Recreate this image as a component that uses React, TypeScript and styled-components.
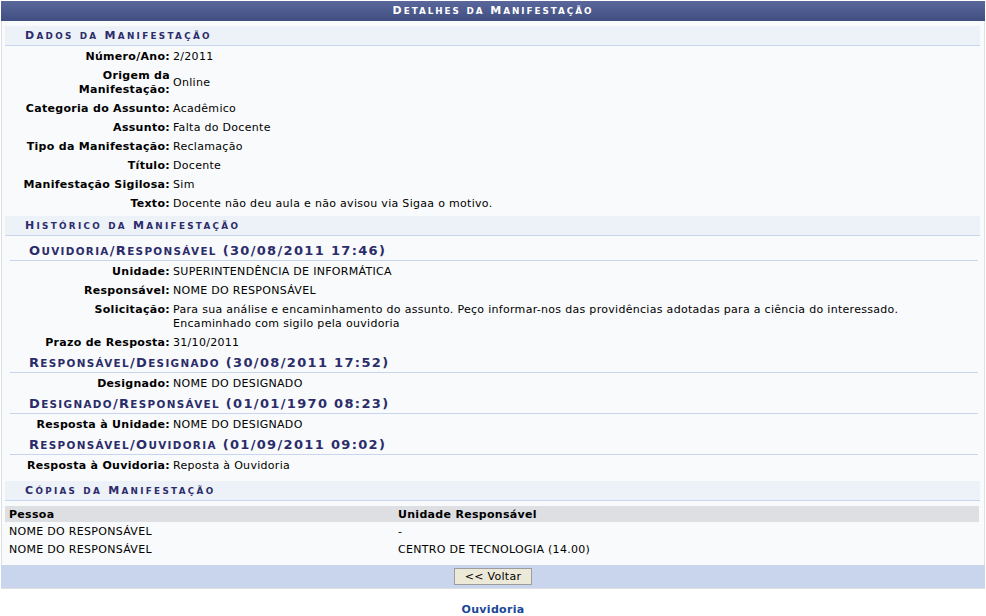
import React from 'react';
import styled, { createGlobalStyle } from 'styled-components';

const GlobalStyle = createGlobalStyle`
    body {
        margin: 0;
        background: #ffffff;
        font-family: 'DejaVu Sans', Verdana, sans-serif;
        font-size: 11px;
        letter-spacing: 0.3px;
        color: #000000;
    }
`;

type Field = { label: React.ReactNode; value: React.ReactNode; top?: boolean };

const dados: Field[] = [
    { label: 'Número/Ano:', value: '2/2011' },
    { label: <>Origem da<br />Manifestação:</>, value: 'Online' },
    { label: 'Categoria do Assunto:', value: 'Acadêmico' },
    { label: 'Assunto:', value: 'Falta do Docente' },
    { label: 'Tipo da Manifestação:', value: 'Reclamação' },
    { label: 'Título:', value: 'Docente' },
    { label: 'Manifestação Sigilosa:', value: 'Sim' },
    { label: 'Texto:', value: 'Docente não deu aula e não avisou via Sigaa o motivo.' },
];

const historico: { title: string; fields: Field[] }[] = [
    {
        title: 'Ouvidoria/Responsável (30/08/2011 17:46)',
        fields: [
            { label: 'Unidade:', value: 'SUPERINTENDÊNCIA DE INFORMÁTICA' },
            { label: 'Responsável:', value: 'NOME DO RESPONSÁVEL' },
            {
                label: 'Solicitação:',
                top: true,
                value: (
                    <>
                        Para sua análise e encaminhamento do assunto. Peço informar-nos das providências adotadas para a ciência do interessado.
                        <br />
                        Encaminhado com sigilo pela ouvidoria
                    </>
                ),
            },
            { label: 'Prazo de Resposta:', value: '31/10/2011' },
        ],
    },
    {
        title: 'Responsável/Designado (30/08/2011 17:52)',
        fields: [{ label: 'Designado:', value: 'NOME DO DESIGNADO' }],
    },
    {
        title: 'Designado/Responsável (01/01/1970 08:23)',
        fields: [{ label: 'Resposta à Unidade:', value: 'NOME DO DESIGNADO' }],
    },
    {
        title: 'Responsável/Ouvidoria (01/09/2011 09:02)',
        fields: [{ label: 'Resposta à Ouvidoria:', value: 'Reposta à Ouvidoria' }],
    },
];

const copias = [
    { pessoa: 'NOME DO RESPONSÁVEL', unidade: '-' },
    { pessoa: 'NOME DO RESPONSÁVEL', unidade: 'CENTRO DE TECNOLOGIA (14.00)' },
];

// versalete: minúsculas viram maiúsculas menores
const SmallCaps = ({ text }: { text: string }) => {
    const runs: { lower: boolean; s: string }[] = [];
    for (const ch of text) {
        const lower = ch !== ch.toUpperCase();
        const last = runs[runs.length - 1];
        if (last && last.lower === lower) last.s += ch;
        else runs.push({ lower, s: ch });
    }
    return (
        <>
            {runs.map((r, i) => (r.lower ? <Lower key={i}>{r.s.toUpperCase()}</Lower> : <span key={i}>{r.s}</span>))}
        </>
    );
};

const FieldRows = ({ fields }: { fields: Field[] }) => (
    <>
        {fields.map((f, i) => (
            <FieldRow key={i} $top={f.top}>
                <FieldLabel>{f.label}</FieldLabel>
                <FieldValue>{f.value}</FieldValue>
            </FieldRow>
        ))}
    </>
);

const App = () => {
    return (
        <Page>
            <GlobalStyle />
            <Panel>
                <Caption>
                    <SmallCaps text="Detalhes da Manifestação" />
                </Caption>
                <PanelBody>
                    <SectionTitle $first>
                        <SmallCaps text="Dados da Manifestação" />
                    </SectionTitle>
                    <FieldRows fields={dados} />

                    <SectionTitle>
                        <SmallCaps text="Histórico da Manifestação" />
                    </SectionTitle>
                    <History>
                        {historico.map((h, i) => (
                            <div key={i}>
                                <StepTitle $first={i === 0}>
                                    <SmallCaps text={h.title} />
                                </StepTitle>
                                <FieldRows fields={h.fields} />
                            </div>
                        ))}
                    </History>

                    <SectionTitle>
                        <SmallCaps text="Cópias da Manifestação" />
                    </SectionTitle>
                    <CopyTable>
                        <thead>
                            <tr>
                                <CopyHead $width={381}>Pessoa</CopyHead>
                                <CopyHead>Unidade Responsável</CopyHead>
                            </tr>
                        </thead>
                        <tbody>
                            {copias.map((c, i) => (
                                <tr key={i}>
                                    <CopyCell>{c.pessoa}</CopyCell>
                                    <CopyCell>{c.unidade}</CopyCell>
                                </tr>
                            ))}
                        </tbody>
                    </CopyTable>
                </PanelBody>
                <Footer>
                    <BackButton type="button">&lt;&lt; Voltar</BackButton>
                </Footer>
            </Panel>
            <LinkBar>
                <ModuleLink href="#">Ouvidoria</ModuleLink>
            </LinkBar>
        </Page>
    );
};

const Lower = styled.span`
    font-size: 0.8em;
`;

// página inteira
const Page = styled.div`
    padding: 1px 1px 0 1px;
`;

// tabela de visualização
const Panel = styled.div`
    width: 982px;
    background: #f9fafb;
    border: 1px solid #dedfe3;
    border-top: none;
`;

const Caption = styled.div`
    height: 20px;
    line-height: 20px;
    margin: 0 -1px;
    background: linear-gradient(#5a679a, #404e81);
    color: #ffffff;
    text-align: center;
    font-weight: bold;
    letter-spacing: 1.95px;
`;

const PanelBody = styled.div`
    padding: 0 4px 0 3px;
`;

// título das seções
const SectionTitle = styled.div<{ $first?: boolean }>`
    margin-top: ${(p) => (p.$first ? '5px' : '3px')};
    margin-bottom: 1px;
    height: 19px;
    line-height: 19px;
    padding-left: 20px;
    background: #edf1f8;
    border-bottom: 1px solid #c8d5ec;
    color: #2b2c6a;
    font-weight: bold;
    letter-spacing: 2.3px;
`;

const History = styled.div`
    padding-bottom: 3px;
`;

// título de cada etapa do histórico
const StepTitle = styled.div<{ $first?: boolean }>`
    margin: ${(p) => (p.$first ? '6px' : '2px')} 2px 1px 5px;
    padding-left: 19px;
    line-height: 18px;
    border-bottom: 1px solid #c8d5ec;
    color: #2b2c6a;
    font-size: 13px;
    font-weight: bold;
    letter-spacing: 1.33px;
`;

// linha label / valor
const FieldRow = styled.div<{ $top?: boolean }>`
    display: grid;
    grid-template-columns: 165px 1fr;
    column-gap: 3px;
    align-items: ${(p) => (p.$top ? 'start' : 'center')};
    padding: 3px 0 2px 0;
    line-height: 14px;
`;

const FieldLabel = styled.div`
    text-align: right;
    font-weight: bold;
`;

const FieldValue = styled.div``;

const CopyTable = styled.table`
    width: 974px;
    margin: 5px 0 7px 0;
    border-collapse: collapse;
`;

const CopyHead = styled.th<{ $width?: number }>`
    width: ${(p) => (p.$width ? `${p.$width}px` : 'auto')};
    height: 16px;
    padding: 0 4px;
    background: #dedfe3;
    text-align: left;
    font-weight: bold;
    font-size: 11px;
`;

const CopyCell = styled.td`
    height: 18px;
    padding: 0 4px;
    font-size: 11px;
`;

const Footer = styled.div`
    height: 23px;
    margin: 0 -1px;
    background: #c8d5ec;
    display: flex;
    align-items: center;
    justify-content: center;
`;

const BackButton = styled.button`
    height: 17px;
    padding: 0 10px;
    background: #ece9d8;
    border: 1px solid #9d9d9d;
    font-family: 'DejaVu Sans', Verdana, sans-serif;
    font-size: 11px;
    letter-spacing: 0.3px;
    color: #000000;
    cursor: pointer;
`;

const LinkBar = styled.div`
    margin-top: 14px;
    text-align: center;
`;

const ModuleLink = styled.a`
    color: #1a4798;
    font-weight: bold;
    text-decoration: none;
`;

export default App;
